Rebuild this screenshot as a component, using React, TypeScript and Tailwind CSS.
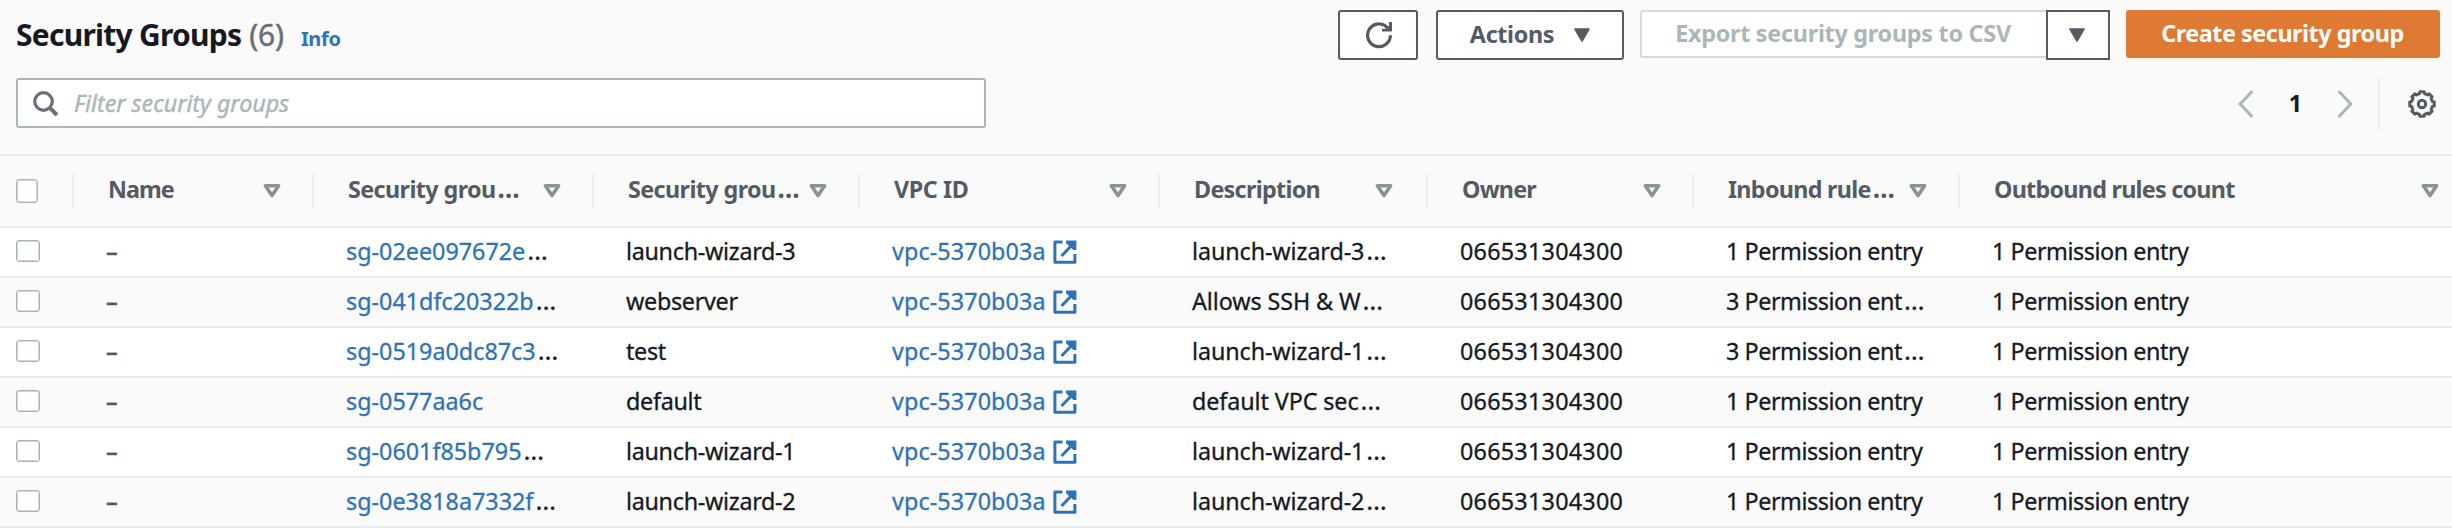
import type { ReactNode } from "react";

const columns = [
  { label: "Name", width: "w-[240px]", tracking: "tracking-[-1px]", end: "pr-[31px]" },
  { label: "Security grou…", width: "w-[280px]", tracking: "tracking-[-0.6px]", end: "pr-[31px]" },
  { label: "Security grou…", width: "w-[266px]", tracking: "tracking-[-0.6px]", end: "pr-[31px]" },
  { label: "VPC ID", width: "w-[300px]", tracking: "tracking-[-0.4px]", end: "pr-[31px]" },
  { label: "Description", width: "w-[268px]", tracking: "tracking-[-0.7px]", end: "pr-[33px]" },
  { label: "Owner", width: "w-[266px]", tracking: "tracking-[-0.8px]", end: "pr-[31px]" },
  { label: "Inbound rule…", width: "w-[266px]", tracking: "tracking-[-0.7px]", end: "pr-[31px]" },
  { label: "Outbound rules count", width: "w-[492px]", tracking: "tracking-[-0.75px]", end: "pr-[11px]" },
];

const groups = [
  { id: "sg-02ee097672e…", name: "launch-wizard-3", description: "launch-wizard-3…", inbound: "1 Permission entry" },
  { id: "sg-041dfc20322b…", name: "webserver", description: "Allows SSH & W…", inbound: "3 Permission ent…" },
  { id: "sg-0519a0dc87c3…", name: "test", description: "launch-wizard-1…", inbound: "3 Permission ent…" },
  { id: "sg-0577aa6c", name: "default", description: "default VPC sec…", inbound: "1 Permission entry" },
  { id: "sg-0601f85b795…", name: "launch-wizard-1", description: "launch-wizard-1…", inbound: "1 Permission entry" },
  { id: "sg-0e3818a7332f…", name: "launch-wizard-2", description: "launch-wizard-2…", inbound: "1 Permission entry" },
];

const gearPath =
  Array.from({ length: 8 }, (_, k) => {
    const at = (deg: number, r: number) => {
      const a = ((k * 45 + deg) * Math.PI) / 180;
      return `${(14 + r * Math.cos(a)).toFixed(2)} ${(14 + r * Math.sin(a)).toFixed(2)}`;
    };
    return `${k ? "L" : "M"}${at(-14, 10.6)}L${at(-10, 12.4)}L${at(10, 12.4)}L${at(14, 10.6)}`;
  }).join("") + "Z";

function Caret() {
  return (
    <svg width="16" height="14" viewBox="0 0 16 14" className="shrink-0">
      <path d="M1 1h14L8 13z" fill="#545b64" stroke="#545b64" strokeWidth="1.6" strokeLinejoin="round" />
    </svg>
  );
}

function SortIcon() {
  return (
    <svg width="18" height="14" viewBox="0 0 18 14" className="shrink-0">
      <path d="M2.4 1.8h13.2L9 11.6z" fill="none" stroke="#879596" strokeWidth="3.6" strokeLinejoin="round" />
    </svg>
  );
}

function ExternalIcon() {
  return (
    <svg width="24" height="24" viewBox="0 0 24 24" fill="none" stroke="#2e73b8" strokeWidth="3" className="shrink-0">
      <path d="M9.5 2H1.9v20.3h20V14" strokeLinejoin="round" />
      <path d="M22 2L8.5 16" />
      <path d="M13 .5h10.4V10h-2.8l-7.6-6.7z" fill="#2e73b8" stroke="none" />
    </svg>
  );
}

function Clipped({ text, link }: { text: string; link?: boolean }) {
  const cut = text.endsWith("…");
  return (
    <span>
      <span className={link ? "text-[#2e73b8]" : ""}>{cut ? text.slice(0, -1) : text}</span>
      {cut && <span className="ml-[2px] text-[26px] leading-[0]">…</span>}
    </span>
  );
}

function Cell({ width, tracking, children }: { width: string; tracking: string; children: ReactNode }) {
  return <div className={`flex items-center pl-8 [-webkit-text-stroke:0.3px] ${width} ${tracking}`}>{children}</div>;
}

export default function App() {
  return (
    <div className="flex h-[528px] w-[2452px] flex-col overflow-hidden whitespace-nowrap bg-[#fafafa] font-['Noto_Sans',sans-serif] text-[23.33px] leading-none text-[#16191f]">
      <header className="flex h-[78px] items-start justify-between pl-4 pr-3 pt-[10px]">
        <div className="flex items-baseline pt-[3px]">
          <h1 className="text-[30px] font-bold leading-[44px] tracking-[-0.75px]">Security Groups</h1>
          <span className="ml-[8px] text-[30px] tracking-[-0.2px] text-[#687078] [-webkit-text-stroke:0.5px]">(6)</span>
          <a className="ml-[17px] text-[20px] font-bold tracking-[-0.3px] text-[#2e73b8]">Info</a>
        </div>
        <div className="flex items-start font-bold">
          <button className="flex h-[50px] w-[80px] items-center justify-center rounded-[3px] border-2 border-[#545b64] bg-white">
            <svg width="28" height="28" viewBox="0 0 28 28" fill="none" stroke="#545b64" strokeWidth="3.2">
              <path d="M26.4 14.3A11.4 11.4 0 1 1 22.5 5.7L25.5 8.5" />
              <path d="M25 1h3v9.4H18V7.8h4.2L25 5.5z" fill="#545b64" stroke="none" />
            </svg>
          </button>
          <button className="ml-[18px] flex h-[50px] w-[188px] items-center justify-center gap-[20px] rounded-[3px] border-2 border-[#545b64] bg-white tracking-[-0.35px] text-[#545b64]">
            <span className="-mt-[1px]">Actions</span>
            <Caret />
          </button>
          <div className="ml-4 flex items-start">
            <button className="flex h-[48px] w-[406px] items-center justify-center rounded-l-[3px] border-2 border-r-0 border-[#d5dbdb] bg-white pr-[2px] tracking-[-0.25px] text-[#aab7b8]">
              Export security groups to CSV
            </button>
            <button className="flex h-[50px] w-[64px] items-center justify-center border-2 border-[#545b64] bg-white pr-[2px]">
              <Caret />
            </button>
          </div>
          <button className="ml-4 flex h-[48px] w-[314px] items-center justify-center rounded-[3px] bg-[#de7a33] pr-[1px] tracking-[-0.45px] text-white">
            Create security group
          </button>
        </div>
      </header>

      <div className="flex h-[76px] items-start justify-between pl-4 pr-4">
        <div className="flex h-[50px] w-[970px] items-center rounded-[3px] border-2 border-[#aab7b8] bg-white pl-[15px]">
          <svg width="26" height="26" viewBox="0 0 26 26" fill="none" stroke="#687078" strokeWidth="3.2" className="mt-[2px]">
            <circle cx="10.5" cy="10.5" r="8.8" />
            <path d="M16.8 16.8l7.2 7.2" strokeWidth="4" />
          </svg>
          <span className="ml-[15px] mt-[2px] italic tracking-[-0.05px] text-[#aab7b8] [-webkit-text-stroke:0.4px]">Filter security groups</span>
        </div>
        <div className="flex h-[52px] items-center">
          <svg width="16" height="28" viewBox="0 0 16 28" fill="none" stroke="#aab7b8" strokeWidth="3">
            <path d="M13.5 2L2.2 14l11.3 12" strokeLinecap="round" />
          </svg>
          <span className="flex w-[83px] justify-center font-bold">1</span>
          <svg width="16" height="28" viewBox="0 0 16 28" fill="none" stroke="#aab7b8" strokeWidth="3">
            <path d="M2.5 2L13.8 14 2.5 26" strokeLinecap="round" />
          </svg>
          <div className="ml-[25px] h-full w-[2px] bg-[#eaeded]" />
          <svg width="28" height="28" viewBox="0 0 28 28" fill="none" stroke="#545b64" strokeWidth="3" className="ml-7">
            <circle cx="14" cy="14" r="3.7" />
            <path strokeLinejoin="round" d={gearPath} />
          </svg>
        </div>
      </div>

      <div className="flex h-[74px] shrink-0 items-center border-y-2 border-[#eaeded] font-bold text-[#545b64]">
        <div className="flex w-[72px] pl-4">
          <span className="h-6 w-[22px] rounded-[3px] border border-[#aab7b8] bg-white shadow-[inset_0_0_0_1px_#d0d8d8]" />
        </div>
        {columns.map((c, i) => (
          <div key={i} className={`flex h-[34px] items-center justify-between border-l-2 border-[#eaeded] pl-[34px] ${c.end} ${c.width} ${c.tracking}`}>
            <span className="pb-[2px]"><Clipped text={c.label} /></span>
            <SortIcon />
          </div>
        ))}
      </div>

      {groups.map((g, i) => (
        <div key={g.id} className={`flex h-[50px] shrink-0 border-b-2 border-[#eaeded] ${i % 2 ? "bg-[#fafafa]" : "bg-white"}`}>
          <div className="flex w-[74px] items-start pl-4 pt-3">
            <span className="h-[22px] w-6 rounded-[3px] border border-[#aab7b8] bg-white shadow-[inset_0_0_0_1px_#d0d8d8]" />
          </div>
          <Cell width="w-[240px]" tracking="tracking-normal"><span className="font-semibold text-[#545b64]">–</span></Cell>
          <Cell width="w-[280px]" tracking="tracking-[0px]"><Clipped text={g.id} link /></Cell>
          <Cell width="w-[266px]" tracking="tracking-[-0.3px]"><Clipped text={g.name} /></Cell>
          <Cell width="w-[300px]" tracking="tracking-[0.1px]">
            <a className="flex items-center gap-[7px] text-[#2e73b8]">vpc-5370b03a <ExternalIcon /></a>
          </Cell>
          <Cell width="w-[268px]" tracking="tracking-[-0.1px]"><Clipped text={g.description} /></Cell>
          <Cell width="w-[266px]" tracking="tracking-[0.25px]">066531304300</Cell>
          <Cell width="w-[266px]" tracking="tracking-[-0.45px]"><Clipped text={g.inbound} /></Cell>
          <Cell width="w-[492px]" tracking="tracking-[-0.45px]">1 Permission entry</Cell>
        </div>
      ))}
    </div>
  );
}
